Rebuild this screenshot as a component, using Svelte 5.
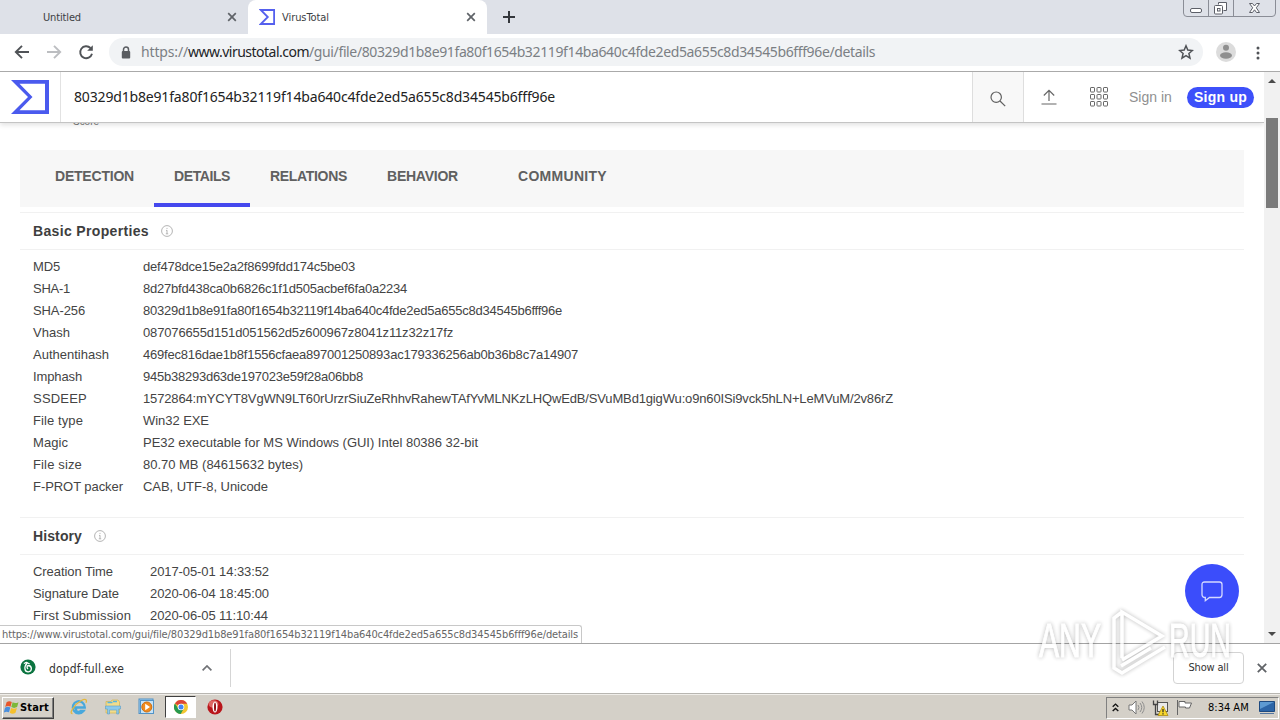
<script lang="ts">
  type Row = { label: string; lw: number; value: string; vw: number };

  const hash = "80329d1b8e91fa80f1654b32119f14ba640c4fde2ed5a655c8d34545b6fff96e";

  const basic: Row[] = [
    { label: "MD5", lw: 27, value: "def478dce15e2a2f8699fdd174c5be03", vw: 212 },
    { label: "SHA-1", lw: 37, value: "8d27bfd438ca0b6826c1f1d505acbef6fa0a2234", vw: 264 },
    { label: "SHA-256", lw: 52, value: hash, vw: 419 },
    { label: "Vhash", lw: 37, value: "087076655d151d051562d5z600967z8041z11z32z17fz", vw: 310 },
    { label: "Authentihash", lw: 76, value: "469fec816dae1b8f1556cfaea897001250893ac179336256ab0b36b8c7a14907", vw: 435 },
    { label: "Imphash", lw: 49, value: "945b38293d63de197023e59f28a06bb8", vw: 220 },
    { label: "SSDEEP", lw: 54, value: "1572864:mYCYT8VgWN9LT60rUrzrSiuZeRhhvRahewTAfYvMLNKzLHQwEdB/SVuMBd1gigWu:o9n60ISi9vck5hLN+LeMVuM/2v86rZ", vw: 750 },
    { label: "File type", lw: 50, value: "Win32 EXE", vw: 66 },
    { label: "Magic", lw: 35, value: "PE32 executable for MS Windows (GUI) Intel 80386 32-bit", vw: 335 },
    { label: "File size", lw: 49, value: "80.70 MB (84615632 bytes)", vw: 160 },
    { label: "F-PROT packer", lw: 90, value: "CAB, UTF-8, Unicode", vw: 125 },
  ];

  const history: Row[] = [
    { label: "Creation Time", lw: 80, value: "2017-05-01 14:33:52", vw: 119 },
    { label: "Signature Date", lw: 86, value: "2020-06-04 18:45:00", vw: 119 },
    { label: "First Submission", lw: 98, value: "2020-06-05 11:10:44", vw: 118 },
  ];

  const tabs = [
    { name: "DETECTION", w: 79, cls: "detection" },
    { name: "DETAILS", w: 56, cls: "details" },
    { name: "RELATIONS", w: 77, cls: "relations" },
    { name: "BEHAVIOR", w: 71, cls: "behavior" },
    { name: "COMMUNITY", w: 89, cls: "community" },
  ];
  let active = $state("DETAILS");

  // Spread the letters so that the text takes up the given width.
  function fit(node: HTMLElement, width: number) {
    const w = node.getBoundingClientRect().width;
    const n = (node.textContent ?? "").length;
    node.style.letterSpacing = `${(width - w) / n}px`;
  }
</script>

{#snippet info()}
  <svg class="info" width="12" height="12" viewBox="0 0 12 12" fill="none" stroke="#b4b4b4">
    <circle cx="6" cy="6" r="5.4" />
    <path d="M6 5.2v3.6M5 5.4h1M4.8 8.8h2.4M5.5 3.4h1" />
  </svg>
{/snippet}

{#snippet section(title: string, tw: number, rows: Row[], cls: string)}
  <section class={cls}>
    <h2><span use:fit={tw}>{title}</span>{@render info()}</h2>
    <div class="rows">
      {#each rows as r}
        <div class="row">
          <div class="label"><span use:fit={r.lw}>{r.label}</span></div>
          <div class="value"><span use:fit={r.vw}>{r.value}</span></div>
        </div>
      {/each}
    </div>
  </section>
{/snippet}

<div class="screen">
  <div class="tabstrip">
    <div class="btab first">
      <span class="ttl" use:fit={38}>Untitled</span>
      <svg width="10" height="10" viewBox="0 0 10 10" stroke="#5f6368" stroke-width="1.7"><path d="M1.2 1.2l7.6 7.6M8.8 1.2L1.2 8.8" /></svg>
    </div>
    <div class="btab current">
      <svg class="fav" width="16" height="16" viewBox="0 0 16 16" fill="none" stroke="#5560ee" stroke-width="1.8"><path d="M1.8 1h13.3v14H1.8l7-7z" /></svg>
      <span class="ttl" use:fit={47}>VirusTotal</span>
      <svg width="10" height="10" viewBox="0 0 10 10" stroke="#5f6368" stroke-width="1.7"><path d="M1.2 1.2l7.6 7.6M8.8 1.2L1.2 8.8" /></svg>
    </div>
    <svg class="plus" width="12" height="12" viewBox="0 0 12 12" stroke="#34373c" stroke-width="2"><path d="M6 0v12M0 6h12" /></svg>
    <svg class="winbtns" width="94" height="18" viewBox="0 0 94 18" fill="none" stroke="#8a8d96">
      <path d="M.5 0v13q0 3.500 3.500 3.500h85q3.500 0 3.500-3.500V0M25.500 0v16.500M50.500 0v16.500" />
      <g stroke="#5c5f68">
        <rect x="7.500" y="8.500" width="11" height="4" rx="1.500" fill="#fff" />
        <path d="M35.500 4.500v-2h8v8h-3" fill="#fff" />
        <rect x="31.500" y="5.500" width="8" height="8.500" rx="1" fill="#fff" />
        <rect x="34.500" y="8.500" width="2.500" height="2.500" />
        <path d="M66.500 3.500h3l2 2.500 2-2.500h3l-3.200 4.300 3.200 4.700h-3l-2-2.700-2 2.700h-3l3.200-4.700z" fill="#fff" />
      </g>
    </svg>
  </div>

  <div class="toolbar">
    <svg class="nav" width="80" height="20" viewBox="0 0 80 20" fill="none" stroke="#505357" stroke-width="1.9">
      <path d="M15 10H2M8 3.800L1.800 10 8 16.200" />
      <path d="M33 10h13M40 3.800l6.200 6.200-6.200 6.200" stroke="#bcbec1" />
      <path d="M76.500 6A6 6 0 1 0 78 11.800" />
      <path d="M78.800 3.200v5.600h-5.600z" fill="#505357" stroke="none" />
    </svg>
    <div class="omnibox">
      <svg class="lock" width="10" height="13" viewBox="0 0 10 13"><path d="M2.500 5.500v-2a2.500 2.500 0 0 1 5 0v2" fill="none" stroke="#5a5d61" stroke-width="1.500" /><rect x=".8" y="5" width="8.400" height="7.500" rx="1" fill="#5a5d61" /></svg>
      <span class="url"><span use:fit={47}>https://</span><span class="host" use:fit={121}>www.virustotal.com</span><span use:fit={566}>/gui/file/{hash}/details</span></span>
      <svg class="star" width="16" height="16" viewBox="0 0 16 16" fill="none" stroke="#505357" stroke-width="1.500"><path d="M8 1.800l1.800 4.300 4.600.4-3.500 3 1.100 4.600L8 11.700l-4 2.400 1.100-4.600-3.500-3 4.600-.4z" /></svg>
    </div>
    <svg class="avatar" width="20" height="20" viewBox="0 0 20 20"><circle cx="10" cy="10" r="10" fill="#dcdcdc" /><circle cx="10" cy="5.800" r="3" fill="#8f8f8f" /><ellipse cx="10" cy="13.500" rx="6" ry="3.200" fill="#8f8f8f" /></svg>
    <svg class="dots" width="4" height="14" viewBox="0 0 4 14" fill="#505357"><circle cx="2" cy="2" r="1.500" /><circle cx="2" cy="7" r="1.500" /><circle cx="2" cy="12" r="1.500" /></svg>
  </div>

  <div class="viewport">
    <div class="page">
      <header>
        <div class="logo">
          <svg width="38" height="34" viewBox="0 0 38 34" fill="#4a5aee"><path fill-rule="evenodd" d="M0 0h38v34H0l17-17zM8.500 3.700L21.500 17 8.500 30.300H34V3.700z" /></svg>
        </div>
        <div class="query"><span use:fit={481}>{hash}</span></div>
        <div class="search">
          <svg width="16" height="16" viewBox="0 0 16 16" fill="none" stroke="#606060" stroke-width="1.200"><circle cx="6.200" cy="6.200" r="5.200" /><path d="M10 10l5.200 5.200" /></svg>
        </div>
        <svg class="upload" width="16" height="16" viewBox="0 0 16 16" fill="none" stroke="#666" stroke-width="1.200"><path d="M8 12V1.500M2.800 6.500L8 1.300l5.200 5.200M.5 15h15" /></svg>
        <svg class="grid" width="19" height="20" viewBox="0 0 19 20" fill="none" stroke="#666">
          {#each [0.5, 7.5, 14.5] as y}
            {#each [0.5, 7, 13.5] as x}
              <rect {x} {y} width="4" height="4.500" rx=".6" />
            {/each}
          {/each}
        </svg>
        <span class="signin" use:fit={43}>Sign in</span>
        <button class="signup"><span use:fit={53}>Sign up</span></button>
      </header>

      <main>
        <div class="score"><span use:fit={26}>Score</span></div>
        <nav>
          {#each tabs as t}
            <button class="tab {t.cls}" class:on={active === t.name} onclick={() => (active = t.name)}><span use:fit={t.w}>{t.name}</span></button>
          {/each}
        </nav>
        {@render section("Basic Properties", 116, basic, "basic")}
        {@render section("History", 49, history, "history")}
      </main>
    </div>
    <div class="scrollbar">
      <svg width="8" height="4" viewBox="0 0 8 4"><path d="M0 4l4-4 4 4z" fill="#4a4a4a" /></svg>
      <div class="thumb"></div>
      <svg width="8" height="4" viewBox="0 0 8 4"><path d="M0 0l4 4 4-4z" fill="#4a4a4a" /></svg>
    </div>
    <button class="chat" aria-label="Chat">
      <svg width="22" height="21" viewBox="0 0 22 21" fill="none" stroke="#d5d9ff" stroke-width="1.300"><path d="M3.500 1h15Q21 1 21 3.500v10q0 3-2.500 3H8.500l-4.200 3.200v-3.200Q1 16.500 1 13.500v-10Q1 1 3.500 1z" /></svg>
    </button>
    <div class="status"><span use:fit={576}>https://www.virustotal.com/gui/file/{hash}/details</span></div>
  </div>

  <div class="shelf">
    <div class="download">
      <svg class="ficon" width="16" height="16" viewBox="0 0 16 16"><circle cx="8" cy="8" r="7.600" fill="#0b7440" /><path d="M3.800 4.500c1.500 0 1.300-1.300 2.600-1.100 1.300.2 1.700 1.500 3.300 1.300M7 4c-1.500 2-2.500 4-2 6.200a3.200 3.200 0 1 0 3.300-3.700c-1.600.2-1.700 2.700-.2 3.300" fill="none" stroke="#fff" stroke-width="1.300" /></svg>
      <span class="fname" use:fit={75}>dopdf-full.exe</span>
      <svg class="chev" width="10" height="6" viewBox="0 0 10 6" fill="none" stroke="#707276" stroke-width="1.700"><path d="M.6 5.400L5 1l4.400 4.400" /></svg>
    </div>
    <button class="showall"><span use:fit={40}>Show all</span></button>
    <svg width="10" height="10" viewBox="0 0 10 10" stroke="#606367" stroke-width="1.800"><path d="M.8.8l8.400 8.400M9.200.8L.8 9.200" /></svg>
  </div>

  <div class="taskbar">
    <button class="start">
      <svg width="16" height="15" viewBox="0 0 16 15">
        <path d="M2.600 2.200Q5 .3 7.800 1.900L6.500 6.700Q4 5.300 1.200 6.900z" fill="#e8562a" />
        <path d="M8.600 2.300q2.600 1.600 5.900-.1l-1.400 4.900Q10 8.700 7.300 7.100z" fill="#7cb83a" />
        <path d="M1 7.700Q3.700 6.100 6.300 7.500L5 12.300Q2.300 11-.2 12.500z" fill="#4a8fdd" />
        <path d="M7.100 7.900q2.700 1.600 5.800 0l-1.400 4.900q-3 1.700-5.700 0z" fill="#f5c02c" />
      </svg>
      <span use:fit={29}>Start</span>
    </button>
    <svg class="ql" width="18" height="18" viewBox="0 0 18 18" fill="none"><path d="M3.500 9.500h11.300A6 6 0 1 0 13.500 13h-3q-1.800 1.800-3.800.3Q5.800 12 6 10" stroke="#48a8dc" stroke-width="2.300" /><path d="M2.500 15.500C-1.500 16 4 6.800 11 2.800c4-2.300 6.500-1.800 5 2" stroke="#e4b83e" stroke-width="1.300" /></svg>
    <svg class="ql" width="18" height="18" viewBox="0 0 18 18"><path d="M2 3.500h5l1-1.500h6l1.500 2v11H2z" fill="#f2dc8a" stroke="#d5b859" stroke-width=".8" /><path d="M3.500 4.500h5M9 3.500h4" stroke="#57b5df" stroke-width="1.500" /><path d="M1.500 8h15v3h-1.800v5h-2v-4H5.500v4h-2v-5h-2z" fill="#8cc9ea" stroke="#5aa0cb" stroke-width=".6" /></svg>
    <svg class="ql" width="18" height="18" viewBox="0 0 18 18"><rect x="1" y="1" width="14" height="14.500" fill="#a7d2f2" stroke="#4e8fc4" /><rect x="2.500" y="2.500" width="13" height="13" fill="#c6e3f7" stroke="#5293c7" /><circle cx="8.800" cy="9" r="5" fill="#f08a1d" stroke="#d06e10" /><path d="M7.200 5.800l4.800 3.200-4.800 3.200z" fill="#fff" /></svg>
    <div class="running">
      <svg width="14" height="14" viewBox="0 0 14 14"><circle cx="7" cy="7" r="7" fill="#f3c631" /><path d="M7 7L1 3.400A7 7 0 0 1 13.200 3.800H7z" fill="#dd4437" /><path d="M.9 3.400A7 7 0 0 0 6.700 14L9.800 8.600 7 7 4.300 8.600z" fill="#27994f" /><circle cx="7" cy="7" r="3.300" fill="#fff" /><circle cx="7" cy="7" r="2.500" fill="#4285f4" /></svg>
    </div>
    <svg class="ql opera" width="16" height="16" viewBox="0 0 16 16"><circle cx="8" cy="8" r="7.600" fill="#b9151b" /><ellipse cx="6.500" cy="5" rx="5" ry="3.800" fill="#dd6764" /><ellipse cx="8" cy="8" rx="2.500" ry="5.500" fill="#fff" /><ellipse cx="8" cy="8" rx="1" ry="4.600" fill="#8f1015" /></svg>
    <div class="tray">
      <svg class="up" width="7" height="9" viewBox="0 0 7 9" fill="none" stroke="#111" stroke-width="1.400"><path d="M.7 3.700l2.800-2.600 2.800 2.600M.7 8l2.800-2.600L6.300 8" /></svg>
      <svg class="sound" width="17" height="15" viewBox="0 0 17 15" fill="none" stroke="#777"><path d="M1 5h3l4-4v13l-4-4H1z" fill="#fff" /><path d="M10 5q2 2.500 0 5M12 3q3.500 4.500 0 9M14 1.500q4.500 6 0 12" stroke="#8d8d8d" /></svg>
      <svg class="net" width="17" height="16" viewBox="0 0 17 16"><rect x="5.500" y="2.500" width="10" height="9" fill="#e9e9e9" stroke="#555" /><path d="M1.500.500v4h4v-4M3.500 4.500v10h4" fill="none" stroke="#444" stroke-width="1.300" /><path d="M11 6l5 9.500H6z" fill="#f8d72b" stroke="#ad8c10" stroke-width=".8" /><path d="M11 9v3.200M11 13.200v1.200" stroke="#222" stroke-width="1.200" /></svg>
      <svg class="flag" width="17" height="15" viewBox="0 0 17 15" fill="#fff" stroke="#666"><path d="M1.500 0v15M3 1.500h6v1.500h6.500l-2 5h-4V7H3z" /></svg>
      <span class="clock" use:fit={41}>8:34 AM</span>
      <svg class="desk" width="16" height="14" viewBox="0 0 16 14"><path d="M.5.500h15v10H.5z" fill="#2c65a7" stroke="#1e4a80" /><path d="M1 1h14L1 8z" fill="#5d9ad2" /><path d="M1 12.500h14" stroke="#5577a0" /></svg>
    </div>
  </div>

  <svg class="watermark" width="206" height="76" viewBox="0 0 206 76">
    <g class="wm-text">
      <text x="3" y="51" textLength="62" lengthAdjust="spacingAndGlyphs">ANY</text>
      <text x="133" y="51" textLength="62" lengthAdjust="spacingAndGlyphs">RUN</text>
    </g>
    <path d="M86 52V6l40 24-40 24M86 6l-8 6v50l8 5 43-26M85 60l30-18" />
  </svg>
</div>

<style>
  :global(body) {
    overflow: hidden;
    background: #fff;
  }
  .screen {
    position: relative;
    width: 1280px;
    height: 720px;
    display: flex;
    flex-direction: column;
    font-family: "DejaVu Sans", sans-serif;
    font-stretch: condensed;
    font-variant-ligatures: none;
    white-space: nowrap;
    overflow: hidden;
  }
  span {
    display: inline-block;
    white-space: nowrap;
  }
  svg {
    display: block;
    flex: none;
  }
  button {
    font: inherit;
    border: 0;
    padding: 0;
    background: none;
    color: inherit;
  }

  /* browser chrome */
  .tabstrip {
    flex: 0 0 34px;
    display: flex;
    background: #dee1e8;
    font-size: 11px;
    color: #3c4043;
  }
  .btab {
    display: flex;
    align-items: center;
    box-sizing: border-box;
    padding-right: 11px;
  }
  .first {
    width: 248px;
    padding-left: 43px;
  }
  .current {
    width: 239px;
    padding-left: 11px;
    background: #fff;
    border-radius: 8px 8px 0 0;
  }
  .btab .ttl {
    margin-right: auto;
  }
  .fav {
    margin-right: 7px;
  }
  .plus {
    margin: 11px 0 0 16px;
  }
  .winbtns {
    margin: 0 3px 0 auto;
  }
  .toolbar {
    flex: 0 0 37px;
    display: flex;
    align-items: center;
    background: #fff;
    border-bottom: 1px solid #aaa;
  }
  .nav {
    margin: -2px 0 0 14px;
  }
  .omnibox {
    display: flex;
    align-items: center;
    box-sizing: border-box;
    width: 1094px;
    height: 28px;
    margin: -1px 0 0 15px;
    padding: 0 9px 0 12px;
    border-radius: 14px;
    background: #f1f3f5;
  }
  .url {
    margin: -1px 0 0 10px;
    font-family: "Noto Sans", sans-serif;
    font-stretch: normal;
    font-size: 14px;
    color: #7b7f84;
  }
  .host {
    color: #222427;
  }
  .star {
    margin-left: auto;
  }
  .avatar {
    margin: -2px 0 0 13px;
  }
  .dots {
    margin-left: 20px;
  }

  /* page */
  .viewport {
    position: relative;
    box-sizing: border-box;
    flex: 0 0 572px;
    min-height: 0;
    display: flex;
    border-bottom: 1px solid #a4a4a4;
  }
  .page {
    flex: 1;
    min-height: 0;
    display: flex;
    flex-direction: column;
    font-family: "Liberation Sans", Arial, sans-serif;
    font-stretch: normal;
    color: #444;
    overflow: hidden;
  }
  header {
    position: relative;
    z-index: 1;
    flex: 0 0 50px;
    display: flex;
    align-items: center;
    background: #fff;
    border-bottom: 1px solid #c4c4c4;
    box-shadow: 0 2px 5px rgba(0, 0, 0, 0.12);
  }
  .logo {
    align-self: stretch;
    display: flex;
    align-items: center;
    width: 49px;
    padding-left: 11px;
    border-right: 1px solid #e2e2e2;
  }
  .query {
    flex: 1;
    padding: 0 0 2px 13px;
    font-family: "Noto Sans", sans-serif;
    font-size: 14px;
    color: #222;
  }
  .search {
    align-self: stretch;
    display: flex;
    align-items: center;
    justify-content: center;
    width: 50px;
    padding-top: 3px;
    background: #f8f8f8;
    border: solid #dedede;
    border-width: 0 1px;
  }
  .upload {
    margin-left: 17px;
  }
  .grid {
    margin-left: 33px;
  }
  .signin {
    width: 43px;
    margin: 0 15px 0 20px;
    font-size: 14px;
    color: #909090;
  }
  .signup {
    width: 67px;
    height: 21px;
    margin-right: 10px;
    border-radius: 11px;
    background: #3d50fa;
    color: #fff;
    font-size: 14px;
    font-weight: 700;
  }
  main {
    flex: 1;
    min-height: 0;
    padding: 0 20px;
  }
  .score {
    height: 27px;
    padding-left: 53px;
    font-size: 10px;
    line-height: 12px;
    color: #777;
  }
  .score span {
    position: relative;
    top: -7px;
  }
  nav {
    display: flex;
    height: 57px;
    margin-bottom: 5px;
    background: #f7f7f7;
  }
  .tab {
    box-sizing: border-box;
    height: 57px;
    padding: 0 20px 2px;
    border-bottom: 4px solid transparent;
    font-size: 14px;
    font-weight: 700;
    color: #606060;
    text-align: left;
  }
  .tab.on {
    border-bottom-color: #4548ee;
  }
  .detection {
    width: 119px;
    margin-left: 15px;
  }
  .details {
    width: 96px;
  }
  .relations {
    width: 117px;
  }
  .behavior {
    width: 131px;
  }
  .community {
    width: 129px;
  }
  h2 {
    display: flex;
    align-items: center;
    height: 36px;
    margin: 0;
    padding-left: 13px;
    border: solid #f1f1f1;
    border-width: 1px 0;
    font-size: 14px;
    color: #3e3e3e;
  }
  .info {
    margin-left: 12px;
  }
  .rows {
    padding: 6px 0 19px 13px;
  }
  .row {
    display: flex;
    height: 22px;
    line-height: 22px;
    font-size: 13px;
  }
  .label {
    width: 110px;
  }
  .history .label {
    width: 117px;
  }
  .scrollbar {
    flex: 0 0 16px;
    box-sizing: border-box;
    display: flex;
    flex-direction: column;
    align-items: center;
    padding: 7px 0;
    background: #f1f1f1;
  }
  .thumb {
    width: 12px;
    height: 90px;
    margin: 35px 0 auto;
    background: #7b7b7b;
  }
  .chat {
    position: absolute;
    left: 1185px;
    top: 492px;
    z-index: 2;
    display: flex;
    align-items: center;
    justify-content: center;
    width: 54px;
    height: 54px;
    border-radius: 50%;
    background: #3b4dfb;
  }
  .status {
    position: absolute;
    left: 0;
    bottom: 0;
    z-index: 2;
    box-sizing: border-box;
    width: 582px;
    height: 18px;
    padding-left: 2px;
    border: solid #c8c8c8;
    border-width: 1px 1px 0 0;
    border-radius: 0 3px 0 0;
    background: #fff;
    font-size: 11px;
    line-height: 17px;
    color: #666;
  }

  /* downloads */
  .shelf {
    flex: 0 0 49px;
    box-sizing: border-box;
    display: flex;
    align-items: center;
    padding: 0 13px 2px 0;
    background: #fff;
  }
  .download {
    box-sizing: border-box;
    display: flex;
    align-items: center;
    width: 231px;
    height: 38px;
    margin-right: auto;
    padding: 0 18px 0 20px;
    border-right: 1px solid #d5d5d5;
  }
  .ficon {
    margin-bottom: 2px;
  }
  .fname {
    margin: 3px auto 0 13px;
    font-size: 12px;
    color: #333;
  }
  .showall {
    box-sizing: border-box;
    width: 71px;
    height: 32px;
    margin-right: 13px;
    border: 1px solid #d3d3d3;
    border-radius: 4px;
    font-size: 11px;
    color: #333;
  }

  /* taskbar */
  .taskbar {
    flex: 0 0 27px;
    box-sizing: border-box;
    display: flex;
    align-items: center;
    background: #d4d0c8;
    border-top: 1px solid #b8b6b1;
    box-shadow: inset 0 1px #f0eeea;
  }
  .start {
    box-sizing: border-box;
    display: flex;
    align-items: center;
    width: 52px;
    height: 22px;
    margin: 1px 16px 0 2px;
    padding-left: 1px;
    border: 1px solid;
    border-color: #fff #404040 #404040 #fff;
    box-shadow: inset -1px -1px #808080;
    color: #000;
    font-size: 11px;
    font-weight: 700;
  }
  .ql {
    margin-right: 16px;
  }
  .running {
    box-sizing: border-box;
    display: flex;
    align-items: center;
    justify-content: center;
    width: 31px;
    height: 22px;
    margin: 0 11px 0 -7px;
    border: 1px solid;
    border-color: #404040 #fff #fff #404040;
    background: #fff;
  }
  .tray {
    box-sizing: border-box;
    display: flex;
    align-items: center;
    width: 173px;
    height: 22px;
    margin: 1px 1px 0 auto;
    padding-left: 5px;
    border: 1px solid;
    border-color: #808080 #fff #fff #808080;
  }
  .sound {
    margin-left: 9px;
  }
  .net {
    margin-left: 7px;
  }
  .flag {
    margin-left: 7px;
  }
  .clock {
    width: 41px;
    margin-left: 15px;
    font-size: 11px;
    color: #000;
  }
  .desk {
    margin-left: 10px;
  }

  .watermark {
    position: absolute;
    left: 1036px;
    top: 606px;
    z-index: 3;
    overflow: visible;
    fill: none;
    stroke: #fff;
    stroke-width: 3.5;
    opacity: 0.8;
    filter: drop-shadow(0 0 2px rgba(0, 0, 0, 0.35));
    pointer-events: none;
  }
  .wm-text {
    font-family: "Liberation Sans", sans-serif;
    font-size: 48px;
    fill: #fff;
    stroke-width: 1;
  }
</style>
